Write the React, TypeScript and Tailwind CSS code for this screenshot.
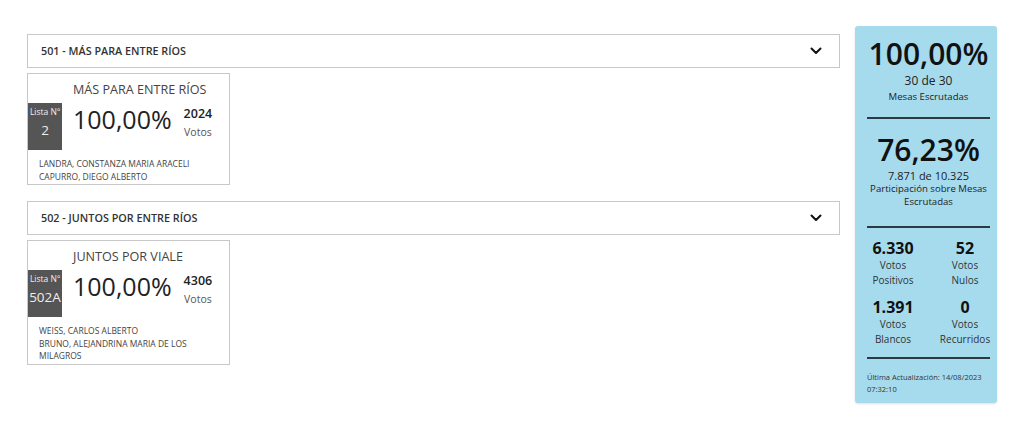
import React from 'react';

interface Candidate {
  lista: string;
  name: string;
  percent: string;
  votes: number;
  people: string[];
}

interface Agrupacion {
  title: string;
  candidates: Candidate[];
}

const agrupaciones: Agrupacion[] = [
  {
    title: '501 - MÁS PARA ENTRE RÍOS',
    candidates: [
      { lista: '2', name: 'MÁS PARA ENTRE RÍOS', percent: '100,00%', votes: 2024, people: ['LANDRA, CONSTANZA MARIA ARACELI', 'CAPURRO, DIEGO ALBERTO'] },
    ],
  },
  {
    title: '502 - JUNTOS POR ENTRE RÍOS',
    candidates: [
      { lista: '502A', name: 'JUNTOS POR VIALE', percent: '100,00%', votes: 4306, people: ['WEISS, CARLOS ALBERTO', 'BRUNO, ALEJANDRINA MARIA DE LOS MILAGROS'] },
    ],
  },
];

const Chevron = () => (
  <svg width="12" height="8" viewBox="0 0 12 8" fill="none">
    <path d="M1.5 1.5L6 6L10.5 1.5" stroke="#111" strokeWidth="2" strokeLinecap="round" strokeLinejoin="round" />
  </svg>
);

const CandidateCard: React.FC<{ c: Candidate }> = ({ c }) => (
  <div className="w-[203px] border border-[#c8c8c8] bg-white pb-[1px]">
    <div className="pl-[45px] pt-[7px] text-[12.6px] leading-[18px] text-[#444]">{c.name}</div>
    <div className="flex items-start">
      <div className="mt-[4px] flex h-[47px] w-[34px] flex-col items-center bg-[#555] text-[#eee]">
        <span className="mt-[3px] text-[8.5px] leading-[12px]">Lista Nº</span>
        <span className="mt-[3px] text-[13.5px] leading-[18px]">{c.lista}</span>
      </div>
      <div className="ml-[11px] mt-[2px] text-[25px] leading-[36px] text-[#222]">{c.percent}</div>
      <div className="ml-[12px] mt-[6px] flex flex-col items-center">
        <span className="text-[12.5px] leading-[18px] font-semibold text-[#222]">{c.votes}</span>
        <span className="text-[10.5px] leading-[18px] text-[#555]">Votos</span>
      </div>
    </div>
    <div className="mt-[8px] px-[11px] text-[8.5px] leading-[12.5px] text-[#444] uppercase">
      {c.people.map((p) => (
        <div key={p}>{p}</div>
      ))}
    </div>
  </div>
);

const Stat: React.FC<{ value: string; label1: string; label2: string }> = ({ value, label1, label2 }) => (
  <div className="flex flex-col items-center text-center">
    <span className="text-[16px] leading-[19px] font-bold text-[#111]">{value}</span>
    <span className="text-[10px] leading-[15px] text-[#333]">{label1}</span>
    <span className="text-[10px] leading-[15px] text-[#333] whitespace-nowrap">{label2}</span>
  </div>
);

export default function App() {
  return (
    <div className="flex gap-[15px] bg-white px-[27px] pt-[26px] pb-[24px] min-h-[429px]" style={{ fontFamily: '"Open Sans", "Liberation Sans", sans-serif' }}>
      <div className="flex-1 pt-[8px]">
        {agrupaciones.map((a) => (
          <div key={a.title} className="mb-[16px]">
            <div className="flex h-[34px] items-center justify-between border border-[#c8c8c8] bg-white pl-[13px] pr-[17px]">
              <span className="text-[10.8px] font-semibold text-[#333]">{a.title}</span>
              <Chevron />
            </div>
            <div className="mt-[5px] flex gap-3">
              {a.candidates.map((c) => (
                <CandidateCard key={c.lista} c={c} />
              ))}
            </div>
          </div>
        ))}
      </div>

      <div className="w-[142px] self-start rounded-[3px] bg-[#a6dbed] pl-[12px] pr-[7px] pt-[10px] pb-[8px] shadow-sm">
        <div className="flex flex-col items-center text-center">
          <span className="text-[30px] leading-[36px] font-semibold text-[#111]">100,00%</span>
          <span className="mt-[1px] text-[12px] leading-[16px] text-[#222]">30 de 30</span>
          <span className="text-[9.6px] leading-[16px] text-[#222]">Mesas Escrutadas</span>
        </div>
        <div className="mt-[12px] h-[2px] bg-[#2b3a40]" />
        <div className="mt-[13px] flex flex-col items-center text-center">
          <span className="text-[30px] leading-[36px] font-semibold text-[#111]">76,23%</span>
          <span className="text-[11px] leading-[15px] text-[#222]">7.871 de 10.325</span>
          <span className="text-[9.6px] leading-[12.5px] text-[#222]">Participación sobre Mesas Escrutadas</span>
        </div>
        <div className="mt-[18px] h-[2px] bg-[#2b3a40]" />
        <div className="mt-[11px] grid grid-cols-[52px_52px] gap-x-[20px] gap-y-[10px]">
          <Stat value="6.330" label1="Votos" label2="Positivos" />
          <Stat value="52" label1="Votos" label2="Nulos" />
          <Stat value="1.391" label1="Votos" label2="Blancos" />
          <Stat value="0" label1="Votos" label2="Recurridos" />
        </div>
        <div className="mt-[10px] h-[2px] bg-[#2b3a40]" />
        <div className="mt-[12px] text-[7.5px] leading-[12px] text-[#333]">
          <div>Última Actualización: 14/08/2023</div>
          <div>07:32:10</div>
        </div>
      </div>
    </div>
  );
}
